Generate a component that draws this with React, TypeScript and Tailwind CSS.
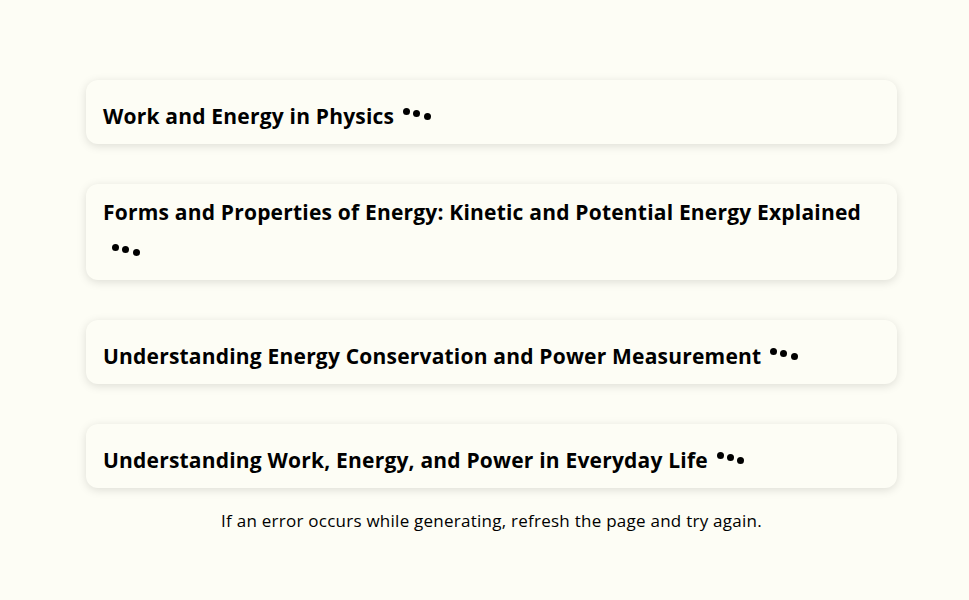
import React from "react";

const titles = [
  "Work and Energy in Physics",
  "Forms and Properties of Energy: Kinetic and Potential Energy Explained",
  "Understanding Energy Conservation and Power Measurement",
  "Understanding Work, Energy, and Power in Everyday Life",
];

function Dots() {
  return (
    <span className="relative inline-block w-[28px] h-[32px] ml-[9px]">
      <span className="absolute left-0 top-[16px] w-[7px] h-[7px] rounded-full bg-black" />
      <span className="absolute left-[10px] top-[18px] w-[7px] h-[7px] rounded-full bg-black" />
      <span className="absolute left-[20.5px] top-[21px] w-[7px] h-[7px] rounded-full bg-black" />
    </span>
  );
}

export default function App() {
  return (
    <div
      className="min-h-[600px] w-full bg-[#fdfdf5] pt-[80px]"
      style={{ fontFamily: '"Open Sans", "Liberation Sans", sans-serif' }}
    >
      <div className="ml-[86px] w-[811px] flex flex-col gap-[40px]">
        {titles.map((t) => (
          <div
            key={t}
            className="bg-[#fdfdf5] rounded-xl shadow-[0_2px_10px_rgba(0,0,0,0.13)] px-[17px] py-[12px]"
          >
            <p className="text-[21px] leading-[32px] font-bold tracking-[0.2px] text-black">
              {t}
              <Dots />
            </p>
          </div>
        ))}
      </div>
      <p className="ml-[86px] w-[811px] text-center text-[17px] leading-[24px] tracking-[0.25px] text-black mt-[21px]">
        If an error occurs while generating, refresh the page and try again.
      </p>
    </div>
  );
}
